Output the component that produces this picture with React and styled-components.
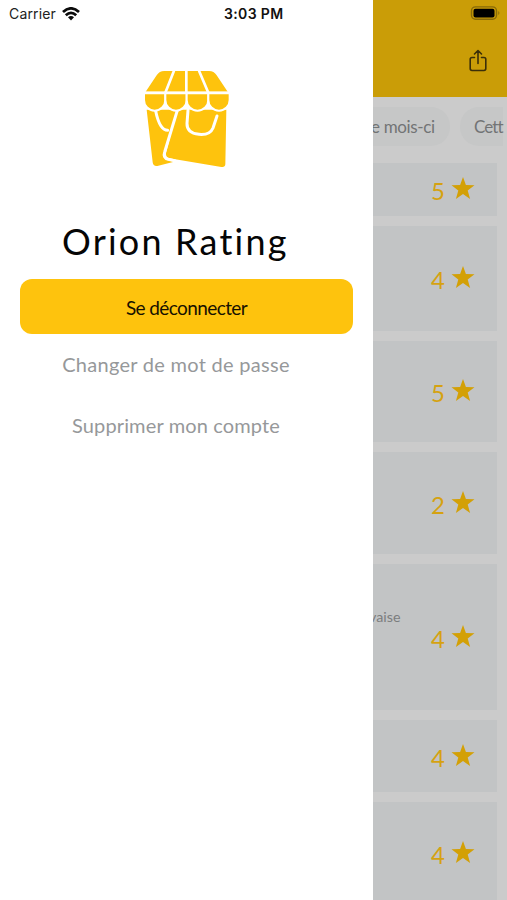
import React from "react";
import styled, { createGlobalStyle } from "styled-components";

const GlobalStyle = createGlobalStyle`
  * { box-sizing: border-box; }
  body { margin: 0; background: #fff; font-family: Lato, sans-serif; }
`;

const Screen = styled.div`
  display: grid;
  grid-template-columns: 373px 134px;
  width: 507px;
  height: 900px;
  overflow: hidden;
`;

const Drawer = styled.aside`
  display: flex;
  flex-direction: column;
  background: #fff;
`;

const StatusBar = styled.div`
  display: flex;
  align-items: center;
  height: 27px;
  padding-left: 9px;
  font-family: Inter, sans-serif;
  font-size: 14px;
  color: #222;
  white-space: nowrap;
`;

const Carrier = styled.span`
  width: 53px;
  letter-spacing: 0.15px;
`;

const Clock = styled.span`
  margin-left: 144px;
  font-weight: 600;
  font-size: 14px;
  letter-spacing: 0.35px;
  color: #111;
`;

const Logo = styled.svg`
  display: block;
  width: 110px;
  height: 115px;
  margin: 33px 0 0 130px;
`;

const Title = styled.h1`
  height: 60px;
  margin: 36px 0 0 62px;
  font-size: 36px;
  line-height: 60px;
  font-weight: 400;
  letter-spacing: ${(p) => p.$spacing}px;
  color: #050505;
  white-space: nowrap;
`;

const LogoutButton = styled.button`
  width: 333px;
  height: 55px;
  margin: 8px 0 0 20px;
  padding: 2px 0 0;
  border: 0;
  border-radius: 12px;
  background: #fec30d;
  font-family: inherit;
  font-size: 19px;
  letter-spacing: -0.6px;
  color: #171100;
`;

const DrawerLink = styled.a`
  display: block;
  width: 352px;
  height: 61px;
  line-height: 61px;
  text-align: center;
  font-size: 20px;
  letter-spacing: ${(p) => p.$spacing}px;
  color: #96989a;
  white-space: nowrap;
`;

const Page = styled.main`
  display: flex;
  flex-direction: column;
  overflow: hidden;
  background: #cbcbcb;
`;

const Header = styled.header`
  display: flex;
  flex-direction: column;
  align-items: flex-end;
  flex: none;
  height: 97px;
  background: #ca9d07;
`;

const Battery = styled.svg`
  width: 32px;
  height: 16px;
  margin: 5px 6px 0 0;
`;

const Share = styled.svg`
  width: 20px;
  height: 24px;
  margin: 28px 19px 0 0;
`;

const Filters = styled.div`
  display: flex;
  flex: none;
  justify-content: space-between;
  width: 130px;
  height: 66px;
  padding-top: 10px;
`;

const Chip = styled.div`
  flex: none;
  width: ${(p) => p.$width}px;
  height: 39px;
  padding-left: ${(p) => p.$pad}px;
  border-radius: ${(p) => p.$radius};
  background: #c6c7c7;
  font-size: 17px;
  line-height: 39px;
  letter-spacing: ${(p) => p.$spacing}px;
  color: #727475;
  white-space: nowrap;
`;

const ChipLabel = styled.span`
  display: inline-block;
  margin-left: -2px;
`;

const Cards = styled.div`
  display: flex;
  flex-direction: column;
  gap: 10px;
  width: 124px;
`;

const Card = styled.article`
  display: grid;
  grid-template-columns: 58px 21px 23px;
  align-items: center;
  flex: none;
  height: ${(p) => p.$height}px;
  background: #c2c4c5;
`;

const Comment = styled.span`
  margin: -41px 0 0 -4px;
  font-size: 14.3px;
  color: #7b7d7e;
`;

const Score = styled.span`
  padding-top: 3px;
  font-size: 24px;
  line-height: 28px;
  color: #d5a211;
`;

const Star = styled.svg`
  width: 24px;
  height: 23px;
  margin: -2px 0 0 -1px;
`;

const reviews = [
  { score: 5, height: 53 },
  { score: 4, height: 105 },
  { score: 5, height: 101 },
  { score: 2, height: 102 },
  { score: 4, height: 146, comment: "vaise" },
  { score: 4, height: 72 },
  { score: 4, height: 102 },
];

function ShopLogo() {
  return (
    <Logo viewBox="0 0 330 345">
      <g fill="#fec30d">
        <path d="M50 149 H145 L103 286 Q101 298 113 301 L132 305 L82 318 Q70 320 68 307 Z" />
        <path d="M142 149 H289 L286 313 Q285 323 274 321 L118 295 Q106 291 108 279 Z" />
        <path d="M103 33 H237 Q252 33 260 46 L293 95 H47 L80 46 Q88 33 103 33 Z" />
      </g>
      <g fill="none" stroke="#fff" strokeLinecap="round" strokeLinejoin="round" strokeWidth="9">
        <path d="M77 153 Q89 211 113 211" />
        <path d="M142 151 L104 276 Q98 294 115 298 L134 302" />
        <path d="M174 151 L171 190 Q170 219 207 223 Q240 226 249 204 L261 168" />
      </g>
      <g fill="#fec30d" stroke="#fff" strokeWidth="6">
        <path d="M42 100 H106 V120 A32 32 0 0 1 42 120 Z" />
        <path d="M106 100 H170 V120 A32 32 0 0 1 106 120 Z" />
        <path d="M170 100 H235 V120 A32.5 32 0 0 1 170 120 Z" />
        <path d="M235 100 H299 V120 A32 32 0 0 1 235 120 Z" />
      </g>
      <path d="M132 32 L106 98 M169 32 V98 M207 32 L235 98" stroke="#fff" strokeWidth="8" />
      <path d="M42 98 H299" stroke="#fff" strokeWidth="7" />
    </Logo>
  );
}

function Wifi() {
  return (
    <svg width="18" height="14" viewBox="0 0 18 14">
      <g fill="none" stroke="#0b0b0b" strokeWidth="2.8">
        <path d="M1 5 Q9 -2.2 17 5" />
        <path d="M3.8 8.2 Q9 3.6 14.2 8.2" />
      </g>
      <path d="M6 10.3 Q9 7.7 12 10.3 L9 13.5 Z" fill="#0b0b0b" />
    </svg>
  );
}

export default function App() {
  return (
    <>
      <GlobalStyle />
      <Screen>
        <Drawer>
          <StatusBar>
            <Carrier>Carrier</Carrier>
            <Wifi />
            <Clock>3:03 PM</Clock>
          </StatusBar>
          <ShopLogo />
          <Title $spacing={2.2}>Orion Rating</Title>
          <LogoutButton>Se déconnecter</LogoutButton>
          <DrawerLink $spacing={0.28}>Changer de mot de passe</DrawerLink>
          <DrawerLink $spacing={0.14}>Supprimer mon compte</DrawerLink>
        </Drawer>
        <Page>
          <Header>
            <Battery viewBox="0 0 32 16">
              <rect x="2.5" y="1.9" width="25" height="12.4" rx="4" fill="none" stroke="#876a09" strokeWidth="1.4" />
              <rect x="4.5" y="3.8" width="21" height="8.8" rx="2" fill="#000" />
              <path d="M29.3 6 Q31.5 8 29.3 10 Z" fill="#876a09" />
            </Battery>
            <Share viewBox="0 0 20 24" fill="none" stroke="#3b2f09" strokeWidth="1.6" strokeLinecap="round" strokeLinejoin="round">
              <path d="M6.5 8.5 H4 Q2.2 8.5 2.2 10.3 V19.6 Q2.2 21.5 4 21.5 H16 Q17.8 21.5 17.8 19.6 V10.3 Q17.8 8.5 16 8.5 H13.5 M10 14.5 V1.5 M6.5 5 L10 1.5 L13.5 5" />
            </Share>
          </Header>
          <Filters>
            <Chip $width={77} $pad={0} $spacing={-0.35} $radius="0 19px 19px 0">
              <ChipLabel>e mois-ci</ChipLabel>
            </Chip>
            <Chip $width={43} $pad={14} $spacing={-0.9} $radius="19px 0 0 19px">Cett</Chip>
          </Filters>
          <Cards>
            {reviews.map((review, i) => (
              <Card key={i} $height={review.height}>
                {review.comment ? <Comment>{review.comment}</Comment> : <span />}
                <Score>{review.score}</Score>
                <Star viewBox="0 0 24 23">
                  <path d="M12 0 L14.9 8.1 L23.5 8.3 L16.7 13.6 L19.1 22 L12 17.1 L4.9 22 L7.3 13.6 L0.5 8.3 L9.1 8.1 Z" fill="#d3a006" />
                </Star>
              </Card>
            ))}
          </Cards>
        </Page>
      </Screen>
    </>
  );
}
